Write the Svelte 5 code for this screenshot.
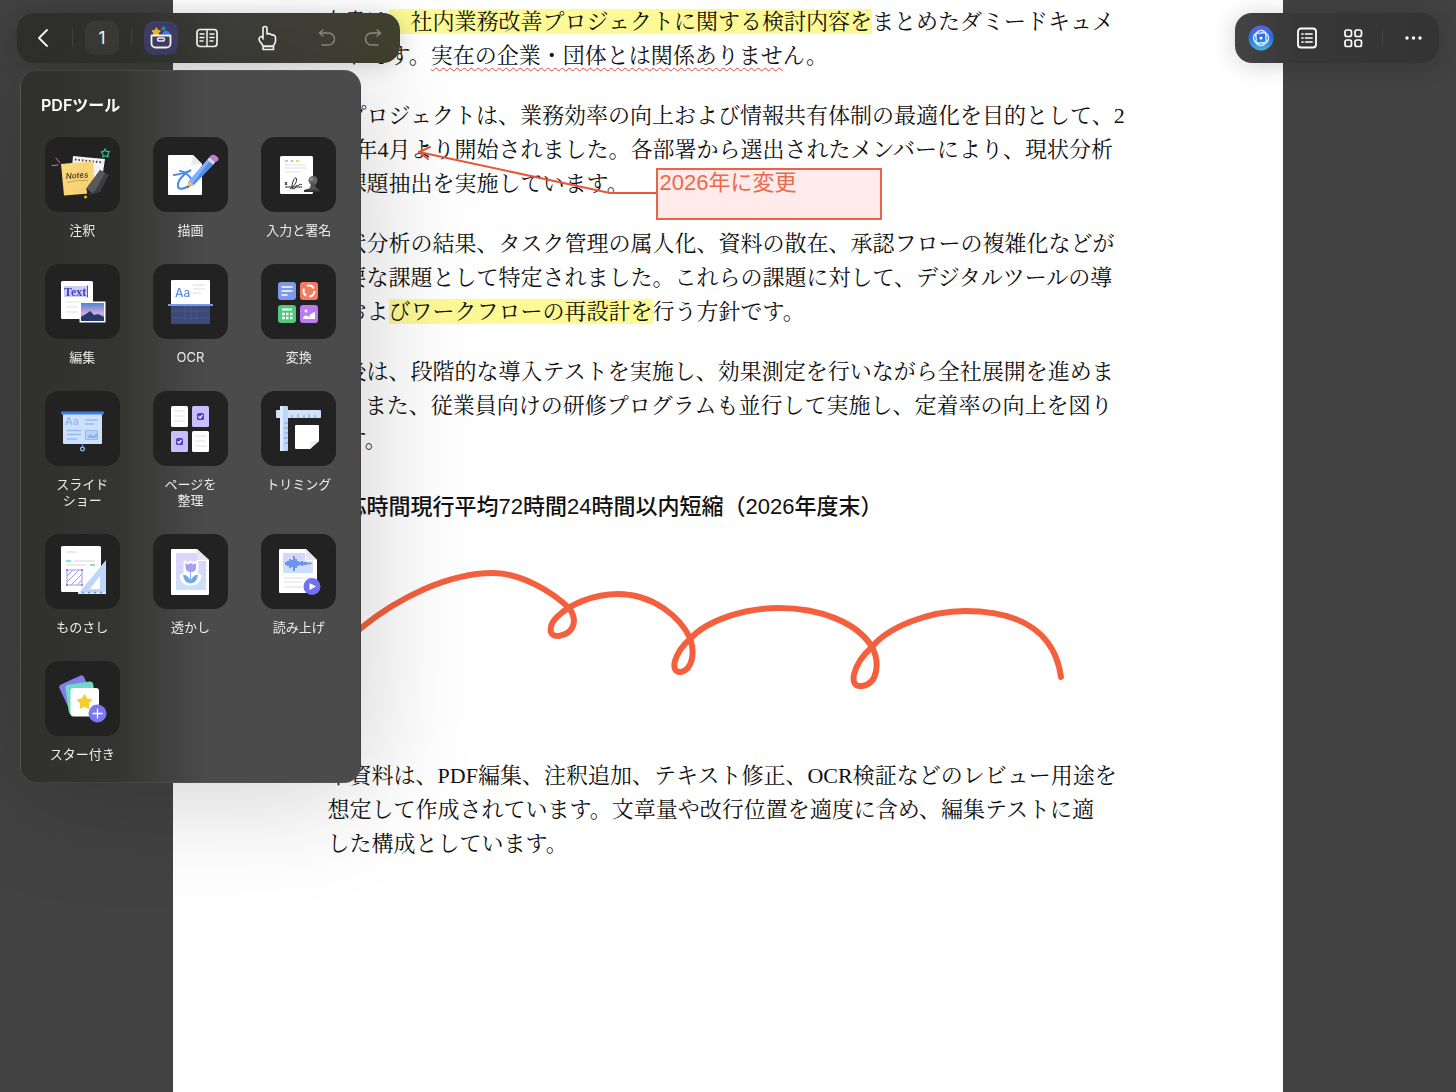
<script>
	let page = $state(1);
	let panelOpen = $state(true);

	const tools = [
		{ id: 'annotate', lines: ['注釈'] },
		{ id: 'draw', lines: ['描画'] },
		{ id: 'sign', lines: ['入力と署名'] },
		{ id: 'edit', lines: ['編集'] },
		{ id: 'ocr', lines: ['OCR'] },
		{ id: 'convert', lines: ['変換'] },
		{ id: 'slideshow', lines: ['スライド', 'ショー'] },
		{ id: 'organize', lines: ['ページを', '整理'] },
		{ id: 'crop', lines: ['トリミング'] },
		{ id: 'measure', lines: ['ものさし'] },
		{ id: 'watermark', lines: ['透かし'] },
		{ id: 'speech', lines: ['読み上げ'] },
		{ id: 'starred', lines: ['スター付き'] }
	];
</script>

{#snippet toolIcon(id)}
	<svg viewBox="0 0 75 75" aria-hidden="true">
		{#if id === 'annotate'}
			<path d="M28 19l32 3-5 33-30-3z" fill="#f4f4f6" />
			<path d="M30 22.500l28 3" stroke="#333" stroke-width="1.800" stroke-dasharray="1.500 2" />
			<path d="M16 27l32-3 2 32-31 2.500z" fill="url(#note)" />
			<text x="21" y="42" class="handwriting" transform="rotate(-4 21 42)">Notes</text>
			<path d="M22 45.500q10-3 21-2" stroke="#a98a45" stroke-width=".7" fill="none" />
			<path d="M55 33l9 5-9 17-11 3-3-6z" fill="#3c3c3f" />
			<path d="M55 33l5 3-10 18-6 4-3-6z" fill="#59595c" />
			<path d="M42 52l5 4-5 2.500z" fill="#242424" />
			<circle cx="40.500" cy="60" r="1.500" fill="#eeb62b" />
			<path d="M7 28.500l6-.5M11 21l4 5" stroke="#e667b0" stroke-width="1" stroke-linecap="round" />
			<path d="M60 12l1.600 2.400 2.700.2-1.500 2.400.5 2.600-2.800-.8-2.600 1v-2.800l-1.600-2.200 2.700-.6z" fill="none" stroke="#30c08e" stroke-width="1.200" />
		{:else if id === 'draw'}
			<path d="M16 18h24l9 9v30a1 1 0 0 1-1 1H16a1 1 0 0 1-1-1V19a1 1 0 0 1 1-1z" fill="#fff" />
			<path d="M40 18l9 9-11 1z" fill="#e9e9ee" />
			<path d="M21 38c7-1 12-2 17-5-7 3-14 11-13 16 0 4 5 3 9 1M27 34c5 1 9 4 12 9" fill="none" stroke="#4a8ce2" stroke-width="2" stroke-linecap="round" />
			<path d="M34 51l2-7 18-21 6 5-19 20z" fill="#4f8df0" />
			<path d="M36 44l18-21 2 2-17 22z" fill="#82b1fb" />
			<path d="M34 51l2-7 5 4z" fill="#f2b987" />
			<path d="M34 51l.7-2.400 1.700 1.400z" fill="#444" />
			<path d="M54 23l2.500-3 6 5-2.500 3z" fill="#d8d5e4" />
			<path d="M56.500 20c3-4 6-2 8 0s1 4-2 5z" fill="#b87fdd" />
		{:else if id === 'sign'}
			<rect x="19" y="19" width="33" height="38" rx="1.500" fill="#fff" />
			<path d="M24 24h3" stroke="#6bcbe6" stroke-width="1.500" />
			<path d="M29.500 24h3" stroke="#7ed690" stroke-width="1.500" />
			<path d="M35 24h3" stroke="#f1c14d" stroke-width="1.500" />
			<path d="M24 28h22M24 31h22M24 35h16" stroke="#e0e0e2" stroke-width="1" />
			<path d="M24 45l2 3M26 45l-2 3M24 50h17M29 52c5-3 8-9 6-11s-6 11-3 11 3-4 4-4 0 2 2 0 2 1 3-1" fill="none" stroke="#2a2a2a" stroke-width="1" />
			<circle cx="52" cy="43.500" r="4.500" fill="#67676a" />
			<path d="M50 46h4l1 5 4 2v2H43v-2l6-2z" fill="#505052" />
			<path d="M43 54h16" stroke="#2d2d2e" stroke-width="1.500" />
			<circle cx="50.500" cy="42" r="1.600" fill="#98989b" />
		{:else if id === 'edit'}
			<rect x="16" y="17" width="32" height="38" rx="1.500" fill="#fff" />
			<rect x="19" y="22" width="23" height="11" fill="#cbd0fb" />
			<text x="19" y="32" class="serif-label">Text</text>
			<path d="M42.500 21.500v12" stroke="#5b55cb" stroke-width="1" />
			<path d="M21 38h20M21 43h12M21 48h12" stroke="#e1e1e4" stroke-width="1" />
			<rect x="34.500" y="37.500" width="26" height="21" fill="#fff" />
			<rect x="36" y="39" width="23" height="18" fill="url(#sunset)" />
			<path d="M36 53l5-3 4-3 4 4 4-1 6 3v4H36z" fill="#263a68" />
		{:else if id === 'ocr'}
			<path d="M18 17a1 1 0 0 1 1-1h37a1 1 0 0 1 1 1v24H18z" fill="#fff" />
			<text x="22" y="33" class="sans-label">Aa</text>
			<path d="M40 21h12M40 25h12M40 29h8" stroke="#dcdce0" stroke-width="1" />
			<rect x="18" y="41" width="39" height="19" fill="#3c4a77" />
			<path d="M18 47h39M18 54h39M32 42v14M38 42v14M44 42v14" stroke="#51608e" stroke-width=".6" />
			<path d="M15 41h45" stroke="#7799eb" stroke-width="1.800" />
		{:else if id === 'convert'}
			<rect x="17" y="18" width="18" height="18" rx="3" fill="#7e97f0" />
			<path d="M21 23h10M21 27h10M21 31h5" stroke="#fff" stroke-width="1.600" stroke-linecap="round" />
			<rect x="39" y="18" width="18" height="18" rx="3" fill="#f27c61" />
			<circle cx="48" cy="27" r="5.500" fill="none" stroke="#fff" stroke-width="2" stroke-dasharray="8 3.500" />
			<rect x="17" y="41" width="18" height="18" rx="3" fill="#4dca7c" />
			<path d="M21 45.500h10" stroke="#fff" stroke-width="2" />
			<path d="M21 50h2.800M25 50h2.500M29 50h2.500M21 54h2.800M25 54h2.500M29 54h2.500" stroke="#fff" stroke-width="2.700" />
			<rect x="39" y="41" width="18" height="18" rx="3" fill="#ba7cf0" />
			<circle cx="45" cy="47" r="1.500" fill="#fff" />
			<path d="M42 55c0-5 6-4 6-1 0-3 2-5 6-6v7z" fill="#fff" />
		{:else if id === 'slideshow'}
			<path d="M37.500 51v6" stroke="#4d8ad8" stroke-width="1.200" />
			<circle cx="37.500" cy="58" r="1.900" fill="#222" stroke="#9dc8fa" stroke-width="1.200" />
			<rect x="18" y="22" width="39" height="31" rx="1" fill="#cde1fc" />
			<rect x="16" y="20.500" width="43" height="3" rx="1" fill="#3c7cdd" />
			<text x="20" y="34" class="slide-label">Aa</text>
			<path d="M40 29h13M40 33h9M22 39.500h14M22 43.500h14M22 48h10" stroke="#95b9f1" stroke-width="1.300" />
			<rect x="40.500" y="39.500" width="12" height="9" fill="#b8d2fa" stroke="#95b9f1" />
			<path d="M42 47l3-4 3 2 4-3v5z" fill="#8cb2ed" />
		{:else if id === 'organize'}
			<rect x="18" y="15" width="17" height="21" rx="1.500" fill="#fff" />
			<rect x="39" y="15" width="17" height="21" rx="1.500" fill="#c9bffc" />
			<rect x="18" y="40" width="17" height="21" rx="1.500" fill="#c9bffc" />
			<rect x="39" y="40" width="17" height="21" rx="1.500" fill="#fff" />
			<path d="M21 20h11M21 25h11M21 30h11M42 45h11M42 50h11M42 55h11" stroke="#dedee0" stroke-width="1" />
			<rect x="44" y="22" width="7" height="7" rx="1.500" fill="#5140cc" />
			<rect x="23" y="47" width="7" height="7" rx="1.500" fill="#5140cc" />
			<path d="M45.500 25.500l1.500 1.500 2.500-3M24.500 50.500l1.500 1.500 2.500-3" fill="none" stroke="#fff" stroke-width="1.200" />
		{:else if id === 'crop'}
			<rect x="15" y="19" width="45" height="8" rx="1" fill="#cfe1fb" />
			<path d="M31 27v-3M37 27v-4M43 27v-3M48 27v-4M54 27v-3" stroke="#6b8ec8" stroke-width=".8" />
			<rect x="19" y="15" width="8" height="45" rx="1" fill="#bcd5fa" />
			<rect x="19" y="15" width="3" height="45" fill="#deebff" />
			<path d="M27 32h-3M27 37h-4M27 42h-3M27 47h-4M27 52h-3" stroke="#6b8ec8" stroke-width=".8" />
			<path d="M34 35a1 1 0 0 1 1-1h22a1 1 0 0 1 1 1v15l-9 8H35a1 1 0 0 1-1-1z" fill="#fff" />
			<path d="M49 58l1-8h8z" fill="#ececef" />
		{:else if id === 'measure'}
			<rect x="16" y="12" width="40" height="46" rx="1.500" fill="#fff" />
			<path d="M21 18h11M29 27h21M21 31h20" stroke="#d5d5d9" stroke-width="1" />
			<path d="M21 27h5" stroke="#69cfe4" stroke-width="1.500" />
			<path d="M45 31h5" stroke="#68d7b2" stroke-width="1.500" />
			<path d="M22 36h15v15H22zM22 42l6-6M22 48l12-12M26 51l11-11M32 51l5-5" fill="none" stroke="#9d9ae9" stroke-width="1" />
			<path d="M21 36h2M36 36h2M21 51h2M36 51h2" stroke="#8b88e0" stroke-width="2" />
			<path fill-rule="evenodd" d="M33 60l28-34v34zM45 55h10V42z" fill="#bdd6fa" />
			<path d="M33 60v-2h28v2z" fill="#d7e7ff" />
			<path d="M37 58.500h2M43 58.500h2M49 58.500h2M55 58.500h2" stroke="#5f91de" stroke-width="1.500" />
		{:else if id === 'watermark'}
			<path d="M19 15h25l12 11v34a1 1 0 0 1-1 1H19a1 1 0 0 1-1-1V16a1 1 0 0 1 1-1z" fill="#fff" />
			<path d="M23 19h21v8h9v29H23z" fill="url(#lilac)" />
			<path d="M44 15v10a1 1 0 0 0 1 1h11z" fill="#e6e6ec" />
			<path d="M32 28l3 2 3-2 3 2 3-2v7q0 5-5 6 4-2 8 1-1 8-10 8-8 0-9-8 4-3 8-1-5-1-4-6z" fill="#fff" stroke="#fff" stroke-width="3" stroke-linejoin="round" />
			<path d="M32.500 29l2.500 1.500 2.700-1.500 2.800 1.500L43 29v5q0 4-5 4t-5.500-4z" fill="#a99ff0" />
			<path d="M37.500 49q-6 0-7-8 6 1 7 8 1-7 7-8-1 8-7 8zM37.500 49V38" fill="#6fa7ee" stroke="#6fa7ee" stroke-width=".8" />
		{:else if id === 'speech'}
			<path d="M19 15h26l11 11v32a1 1 0 0 1-1 1H19a1 1 0 0 1-1-1V16a1 1 0 0 1 1-1z" fill="#fff" />
			<path d="M22 19h22v8h8v12H22z" fill="url(#lilac)" />
			<path d="M45 15v10a1 1 0 0 0 1 1h10z" fill="#e6e6ec" />
			<path d="M24 29.500h27" stroke="#6a94ed" stroke-width="1" />
			<path d="M25 28v3M27 27v5M29 25v9M31 26v7M33 22v15M35 25v9M37 27v5M39 28v3M41 27v5M43 28v3M45 28v3M48 28.500v2" stroke="#6a94ed" stroke-width="2" />
			<path d="M23 44h28M23 48h18M23 53h18" stroke="#dedee1" stroke-width="1" />
			<circle cx="51" cy="52.500" r="8.500" fill="#7471f0" />
			<path d="M48.500 49v7l6.500-3.500z" fill="#fff" />
		{:else}
			<rect x="18" y="18" width="27" height="29" rx="3" fill="#7e80e9" transform="rotate(-25 31 32)" />
			<rect x="22" y="22" width="28" height="30" rx="3" fill="#72d9c5" transform="rotate(-8 36 37)" />
			<rect x="25.500" y="27" width="28.500" height="28.500" rx="3" fill="#fff" />
			<path d="M39.500 34l2.200 4.100 4.600.8-3.200 3.400.6 4.700-4.200-2-4.200 2 .6-4.700-3.200-3.400 4.600-.8z" fill="#f9cd32" stroke="#f9cd32" stroke-width="1.500" stroke-linejoin="round" />
			<circle cx="52.500" cy="52.500" r="9" fill="#7b78f2" />
			<path d="M47.500 52.500h10M52.500 47.500v10" stroke="#fff" stroke-width="1.300" />
		{/if}
	</svg>
{/snippet}

<svg class="defs" aria-hidden="true">
	<defs>
		<linearGradient id="note" x1="0" y1="0" x2="1" y2="1">
			<stop offset="0" stop-color="#fad981" />
			<stop offset="1" stop-color="#f8d06b" />
		</linearGradient>
		<linearGradient id="sunset" x1="0" y1="0" x2="0" y2="1">
			<stop offset="0" stop-color="#4f83d9" />
			<stop offset=".6" stop-color="#d9a9e0" />
			<stop offset="1" stop-color="#46629c" />
		</linearGradient>
		<linearGradient id="lilac" x1="0" y1="0" x2="0" y2="1">
			<stop offset="0" stop-color="#dcd3fa" />
			<stop offset="1" stop-color="#c9e1fb" />
		</linearGradient>
	</defs>
</svg>

<main class="page">
	<article>
		<p>
			本書は<mark>、社内業務改善プロジェクトに関する検討内容を</mark>まとめたダミードキュメ<br />
			ントです。<span class="wavy">実在の企業・団体とは関係ありませ</span>ん。
		</p>
		<p>
			本プロジェクトは、業務効率の向上および情報共有体制の最適化を目的として、2<br />
			025年4月より開始されました。各部署から選出されたメンバーにより、現状分析<br />
			と課題抽出を実施しています。
		</p>
		<p>
			現状分析の結果、タスク管理の属人化、資料の散在、承認フローの複雑化などが<br />
			主要な課題として特定されました。これらの課題に対して、デジタルツールの導<br />
			入およ<mark>びワークフローの再設計を</mark>行う方針です。
		</p>
		<p>
			今後は、段階的な導入テストを実施し、効果測定を行いながら全社展開を進めま<br />
			す。また、従業員向けの研修プログラムも並行して実施し、定着率の向上を図り<br />
			ます。
		</p>
		<h2>対応時間現行平均72時間24時間以内短縮（2026年度末）</h2>
		<p class="closing">
			本資料は、PDF編集、注釈追加、テキスト修正、OCR検証などのレビュー用途を<br />
			想定して作成されています。文章量や改行位置を適度に含め、編集テストに適<br />
			した構成としています。
		</p>
	</article>

	<!-- annotation layer, page coordinates -->
	<svg class="ink" aria-hidden="true">
		<path d="M484 193H437L246 152M257 147l-11 5 9 7" stroke="#e8583b" stroke-width="2" />
		<path
			d="M150 658C168 645 178 637 188 628C225 598 275 573 320 573C348 573 380 592 397 609C404 620 402 633 386 636C374 637 376 624 385 616C396 605 420 594 445 594C480 594 507 617 517 638C522 652 520 669 508 672C496 673 501 653 517 639C534 620 572 608 606 608C646 608 684 622 699 647C707 662 705 684 689 686C674 688 680 664 699 647C715 627 756 611 792 611C850 611 882 634 888 677"
			stroke="#f4603e"
			stroke-width="6"
		/>
	</svg>
	<div class="callout">2026年に変更</div>
</main>

<div class="left-dock">
	<nav class="bar">
		<button aria-label="戻る">
			<svg width="24" height="24" viewBox="0 0 24 24"><path d="M16 4L8 12l8 8" stroke-width="1.800" /></svg>
		</button>
		<span class="divider"></span>
		<button class="page-number">{page}</button>
		<span class="divider"></span>
		<button class="active" aria-label="PDFツール" onclick={() => (panelOpen = !panelOpen)}>
			<svg width="26" height="26" viewBox="0 0 26 26">
				<path d="M8.500 3l1.200 2.400 2.700.4-2 2.200.3 2H5.500L5.700 8 4 5.800l3-.4z" fill="#f6c02c" stroke="#f6c02c" stroke-width="1" />
				<circle cx="15.500" cy="3.500" r="2" fill="#1d9c9c" stroke="none" />
				<path d="M14.500 9.500q0-4 4-4 3.500 1 3.500 4z" fill="#3389ed" stroke="none" />
				<path d="M3.500 10.500h19v8a4 4 0 0 1-4 4h-11a4 4 0 0 1-4-4z" stroke-width="1.800" />
				<rect x="9.500" y="13" width="7" height="3" rx="1.500" stroke-width="1.500" />
			</svg>
		</button>
		<button aria-label="見開き表示">
			<svg width="24" height="24" viewBox="0 0 24 24">
				<rect x="2" y="3.500" width="20" height="17" rx="3" stroke-width="1.700" />
				<path d="M12 4v16M5 8h4M5 11.500h4M5 15h3M15 8h4M15 11.500h4M15 15h3" stroke-width="1.500" />
			</svg>
		</button>
		<button class="spaced" aria-label="手のひら">
			<svg width="26" height="26" viewBox="0 0 26 26">
				<path d="M9 13V3.500a2 2 0 0 1 4 0V9c3-1 4 0 4.500 1 3-.5 4 1 4 3v3c0 2-1.500 3-2 5H9c-1-3-4-4-4-7 0-2 2-3 4-2v2M9 24.500h10.500v-3H9z" stroke-width="1.600" />
			</svg>
		</button>
		<button class="spaced dim" aria-label="元に戻す">
			<svg width="20" height="20" viewBox="0 0 20 20"><path d="M6 2L2.500 5 6 8M3 5h8.500a6 6 0 0 1 0 12H5" stroke-width="1.500" /></svg>
		</button>
		<button class="dim" aria-label="やり直す">
			<svg width="20" height="20" viewBox="0 0 20 20"><path d="M14 2l3.500 3L14 8M17 5H8.500a6 6 0 0 0 0 12H15" stroke-width="1.500" /></svg>
		</button>
	</nav>

	{#if panelOpen}
		<section class="panel">
			<h1>PDFツール</h1>
			<ul>
				{#each tools as tool}
					<li>
						<button class="tool">
							<span class="tile">{@render toolIcon(tool.id)}</span>
							<span class="label">
								{#each tool.lines as line}<span>{line}</span>{/each}
							</span>
						</button>
					</li>
				{/each}
			</ul>
		</section>
	{/if}
</div>

<nav class="bar right-dock">
	<button aria-label="AI">
		<svg width="26" height="26" viewBox="0 0 26 26">
			<defs>
				<linearGradient id="ai" x1="0" y1="0" x2="0" y2="1">
					<stop offset="0" stop-color="#5961ed" />
					<stop offset=".5" stop-color="#276fdd" />
					<stop offset="1" stop-color="#4bb4dc" />
				</linearGradient>
			</defs>
			<circle cx="13" cy="13" r="12.500" fill="url(#ai)" stroke="none" />
			{#each [0, 90, 180, 270] as angle}
				<path d="M8 13C7 8 10 5 14 5.500c3.500.5 5 3.500 3.500 6.500" stroke="#d9edff" stroke-width="1.500" transform="rotate({angle} 13 13)" />
			{/each}
			<circle cx="13" cy="13" r="1.600" fill="#fff" stroke="none" />
		</svg>
	</button>
	<button aria-label="目次">
		<svg width="24" height="24" viewBox="0 0 24 24">
			<rect x="3" y="2.500" width="18" height="19" rx="3" stroke-width="1.800" />
			<path d="M10.500 8H17M10.500 12H17M10.500 16H17M7 8h1M7 12h1M7 16h1" stroke-width="1.700" />
		</svg>
	</button>
	<button aria-label="サムネイル">
		<svg width="24" height="24" viewBox="0 0 24 24">
			<rect x="4" y="4" width="6.500" height="6.500" rx="2" stroke-width="1.700" />
			<rect x="14" y="4" width="6.500" height="6.500" rx="2" stroke-width="1.700" />
			<rect x="4" y="14" width="6.500" height="6.500" rx="2" stroke-width="1.700" />
			<rect x="14" y="14" width="6.500" height="6.500" rx="2" stroke-width="1.700" />
		</svg>
	</button>
	<span class="divider"></span>
	<button aria-label="その他">
		<svg width="24" height="24" viewBox="0 0 24 24">
			<g fill="#fff" stroke="none"><circle cx="7" cy="12" r="1.700" /><circle cx="13.500" cy="12" r="1.700" /><circle cx="20" cy="12" r="1.700" /></g>
		</svg>
	</button>
</nav>

<style>
	:global(body) {
		background: #424242;
	}

	/* document */
	.page {
		position: relative;
		width: 76.3%;
		min-height: 100vh;
		margin: 0 auto;
		background: #fff;
		color: #111;
		overflow: hidden;
		box-sizing: border-box;
		padding: 5px 0 40px 150px;
	}
	article {
		font: 22px/34px "Liberation Serif", "Noto Serif CJK JP", "Noto Sans CJK JP", serif;
		white-space: nowrap;
	}
	p {
		margin: 0 0 26px;
	}
	h2 {
		margin: 33px 0 235px;
		font: 500 22px/34px "Liberation Sans", "Noto Sans CJK JP", sans-serif;
	}
	.closing {
		margin-left: 5px;
	}
	mark {
		background: #fdfa96;
		color: inherit;
	}
	.wavy {
		text-decoration: underline wavy #e2443a 1px;
		text-underline-offset: 4px;
	}
	.ink {
		position: absolute;
		top: 0;
		left: 0;
		width: 100%;
		height: 100%;
		fill: none;
		stroke-linecap: round;
		stroke-linejoin: round;
	}
	.callout {
		position: absolute;
		top: 168px;
		left: 483px;
		width: 226px;
		height: 52px;
		box-sizing: border-box;
		padding: 0 2px;
		border: 2px solid #e8634a;
		background: #ffebe9;
		color: #ea6a4f;
		font: 22px/26px "Liberation Sans", "Noto Sans CJK JP", sans-serif;
	}

	/* floating bars */
	.left-dock {
		position: fixed;
		top: 13px;
		left: 17px;
		display: flex;
		flex-direction: column;
		gap: 7px;
		font-family: Inter, "Noto Sans CJK JP", sans-serif;
	}
	.bar {
		display: flex;
		align-items: center;
		gap: 12px;
		height: 50px;
		box-sizing: border-box;
		padding: 0 10px 0 9px;
		border-radius: 17px;
		background: linear-gradient(90deg, #2f2f2d, #32322f 30%, #3e3e3b 55%, #404036 80%, #40402f);
		box-shadow: 0 2px 24px rgba(0, 0, 0, .18);
	}
	.right-dock {
		position: fixed;
		top: 13px;
		right: 17px;
		background: linear-gradient(90deg, #444, #373737 30%, #343434);
	}
	button {
		display: flex;
		align-items: center;
		justify-content: center;
		width: 34px;
		height: 34px;
		padding: 0;
		border: 0;
		border-radius: 10px;
		background: none;
		color: #fff;
		font: inherit;
	}
	.bar svg {
		fill: none;
		stroke: currentColor;
		stroke-linecap: round;
		stroke-linejoin: round;
	}
	.bar .dim {
		color: #8b8b84;
	}
	.bar .spaced {
		margin-left: 14px;
	}
	.bar .page-number {
		background: #3b3b39;
		font-size: 17px;
	}
	.bar .active {
		background: #413f66;
	}
	.divider {
		width: 1px;
		height: 18px;
		background: #434341;
	}

	/* tool panel */
	.panel {
		width: 341px;
		box-sizing: border-box;
		margin-left: 3px;
		padding: 22px 7px 20px;
		border: 1px solid rgba(110, 110, 100, .3);
		border-radius: 17px;
		background: linear-gradient(90deg, #30302e, #343432 28%, #404040 42%, #4b4b4b 55%, #4b4b4b);
		box-shadow: 0 8px 120px rgba(0, 0, 0, .2);
	}
	h1 {
		margin: 0 0 20px;
		padding-left: 13px;
		color: #fff;
		font-size: 16px;
		font-weight: 600;
		line-height: 24px;
	}
	ul {
		display: grid;
		grid-template-columns: repeat(3, 1fr);
		row-gap: 26px;
		margin: 0;
		padding: 0;
		list-style: none;
	}
	.tool {
		flex-direction: column;
		justify-content: flex-start;
		gap: 10px;
		width: 100%;
		height: auto;
	}
	.tile {
		display: block;
		width: 75px;
		height: 75px;
		border-radius: 14px;
		background: #222;
	}
	.tile svg {
		display: block;
	}
	.label {
		display: flex;
		flex-direction: column;
		color: #ececec;
		font-size: 13px;
		line-height: 16px;
	}
	.handwriting {
		font: italic 500 8px Inter, sans-serif;
		fill: #38301c;
	}
	.serif-label {
		font: bold 12px "Liberation Serif", serif;
		fill: #4a42bd;
	}
	.sans-label {
		font: 500 12px Inter, sans-serif;
		fill: #5a8ede;
	}
	.slide-label {
		font: 500 11px Inter, sans-serif;
		fill: #8cb4f0;
	}
	.defs {
		position: absolute;
		width: 0;
		height: 0;
	}
</style>
